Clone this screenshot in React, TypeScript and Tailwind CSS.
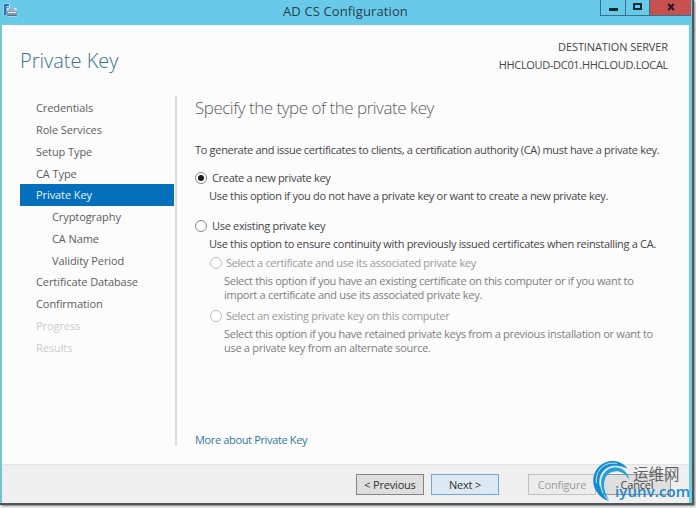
import type { ReactNode } from "react";

const steps = [
  { label: "Credentials", style: "pl-4 text-[#5c5c5c]" },
  { label: "Role Services", style: "pl-4 text-[#5c5c5c]" },
  { label: "Setup Type", style: "pl-4 text-[#5c5c5c]" },
  { label: "CA Type", style: "pl-4 text-[#5c5c5c]" },
  { label: "Private Key", style: "pl-4 bg-[#0470bc] text-[#e4f3fc]" },
  { label: "Cryptography", style: "pl-8 text-[#5c5c5c]" },
  { label: "CA Name", style: "pl-8 text-[#5c5c5c]" },
  { label: "Validity Period", style: "pl-8 text-[#5c5c5c]" },
  { label: "Certificate Database", style: "pl-4 text-[#5c5c5c]" },
  { label: "Confirmation", style: "pl-4 text-[#5c5c5c]" },
  { label: "Progress", style: "pl-4 text-[#cbcbcb]" },
  { label: "Results", style: "pl-4 text-[#cbcbcb]" },
];

function Radio({ checked, disabled, children }: { checked?: boolean; disabled?: boolean; children: ReactNode }) {
  return (
    <div className={disabled ? "flex h-4 items-center gap-[4px] text-[#999]" : "flex h-4 items-center gap-[5px] text-[#444]"}>
      <span
        className={
          disabled
            ? "flex size-[12px] items-center justify-center rounded-full border border-[#bdbdbd] bg-white"
            : "flex size-[12px] items-center justify-center rounded-full border border-[#858585] bg-white"
        }
      >
        {checked && <span className="size-[6px] rounded-full bg-[#1c1c1c]" />}
      </span>
      {children}
    </div>
  );
}

function ServerIcon() {
  return (
    <svg className="mt-[3px] ml-[3px] size-[15px]" viewBox="0 0 15 15">
      <path d="M.5.5h6.500v4.500h6l1 2v6.500H4.500V12H.5Z" fill="#d3edf8" opacity=".8" />
      <path d="M1 1h5v2H3.500v9H1z" fill="#2c73b0" />
      <path d="M3.500 4.500H6" stroke="#4d8fc2" />
      <path d="M6.500 7.500V6h4v1.500" fill="none" stroke="#6a8494" />
      <rect x="4" y="7.500" width="10" height="5.500" rx="1" fill="#8398a8" />
      <path d="M5 9.500h8" stroke="#e3edf2" />
      <path d="M4.500 12.500h9" stroke="#55728a" />
    </svg>
  );
}

function Watermark() {
  return (
    <div className="absolute top-[459px] left-[592px] h-[46px] w-[102px]">
      <svg className="absolute inset-0 h-full w-full" viewBox="0 0 102 46">
        <path d="M35.500 9.500C30 2 20 0 12 4 4 8 0 17 1.500 25 3 33 9 40 17 42 11 37 7 29 8 20 9.500 10 20 3 35.500 9.500Z" fill="#168bd0" />
        <path d="M37.500 21C36 12 27 6 19 9 11 12 8 20 9.500 28 10.500 34 13 38 17 41 13 34 10.500 27 13 20 16 11 30 8 37.500 21Z" fill="#2a9edc" />
        <path d="M4.500 24C3 12 12 2 25 4.500M8 27C6 15 14 5 27 7.500" fill="none" stroke="#d4eefa" strokeWidth=".9" />
      </svg>
      <span className="absolute top-[4px] left-[41px] font-['Noto_Sans_CJK_SC',sans-serif] text-[15.500px] leading-[20px] whitespace-nowrap text-[#606468]">运维网</span>
      <span className="absolute top-[22px] left-[23px] font-['Open_Sans',sans-serif] text-[15px] leading-[20px] font-semibold tracking-[0.1px] whitespace-nowrap text-[#2389ca]">iyunv.com</span>
    </div>
  );
}

export default function App() {
  return (
    <div className="relative h-[508px] w-[696px] overflow-hidden bg-[#f7f7f7] font-['Open_Sans','Noto_Sans',sans-serif] text-[11px] leading-4 whitespace-nowrap">
      <div className="flex h-[505px] w-[694px] flex-col border-r-2 border-b-2 border-[#4d5658] shadow-[1px_1px_2px_#777]">
        <header className="flex h-[25px] shrink-0 bg-[#68cae8]">
          <ServerIcon />
          <h1 className="w-[582px] pl-[73px] text-center text-[13px] leading-[23px] tracking-[0.12px] text-[#27414c]">AD CS Configuration</h1>
          <div className="flex h-[16px] w-[91px] border-b border-l border-[#337387]">
            <div className="flex w-[25px] items-center justify-center border-r border-[#337387]">
              <span className="mt-[3px] h-[3px] w-[9px] bg-[#102a34]" />
            </div>
            <div className="flex w-[24px] items-center justify-center border-r border-[#337387]">
              <span className="mt-[-2px] h-[7px] w-[9px] border-2 border-[#102a34]" />
            </div>
            <div className="flex flex-1 items-center justify-center bg-[#c7514e]">
              <svg className="mt-[-2px] h-[8px] w-[8px]" viewBox="0 0 8 8"><path d="M1.200 1 6.800 7M6.800 1 1.200 7" stroke="#26191b" strokeWidth="2" /></svg>
            </div>
          </div>
        </header>

        <div className="flex min-h-0 flex-1 flex-col border-r-[3px] border-l-2 border-r-[#70cce4] border-l-[#74c5ce] bg-[#fcfcfc]">
          <div className="flex h-[71px] shrink-0 justify-between pr-[21px] pl-[18px]">
            <h2 className="pt-[21px] text-[20px] leading-[30px] font-light text-[#39718e]">Private Key</h2>
            <div className="pt-[13px] text-right text-[11px] leading-[18px] text-[#454545]">
              <p className="tracking-[-0.100px]">DESTINATION SERVER</p>
              <p className="tracking-[-0.320px]">HHCLOUD-DC01.HHCLOUD.LOCAL</p>
            </div>
          </div>

          <div className="flex h-[368px] shrink-0">
            <nav className="ml-[18px] h-[350px] w-[157px] border-r-2 border-[#dedede] pt-[1px] pr-px tracking-[-0.08px]">
              {steps.map(({ label, style }) => (
                <div key={label} className={`flex h-[21.750px] items-center pt-px ${style}`}>{label}</div>
              ))}
            </nav>
            <main className="pl-[18px] tracking-[-0.31px] text-[#444]">
              <h3 className="text-[17px] leading-[24px] font-light tracking-[-0.49px] text-[#5d5d5d]">Specify the type of the private key</h3>
              <p className="mt-[22px]">To generate and issue certificates to clients, a certification authority (CA) must have a private key.</p>
              <div className="mt-[12px]"><Radio checked>Create a new private key</Radio></div>
              <p className="mt-[2px] pl-[14px]">Use this option if you do not have a private key or want to create a new private key.</p>
              <div className="mt-[14px]"><Radio>Use existing private key</Radio></div>
              <p className="mt-[2px] pl-[14px]">Use this option to ensure continuity with previously issued certificates when reinstalling a CA.</p>
              <div className="mt-[3px] pl-[15px]"><Radio disabled>Select a certificate and use its associated private key</Radio></div>
              <div className="mt-[3px] pl-[29px] leading-[14px] tracking-[-0.29px] text-[#7c7c7c]">
                <p>Select this option if you have an existing certificate on this computer or if you want to</p>
                <p>import a certificate and use its associated private key.</p>
              </div>
              <div className="mt-[6px] pl-[15px]"><Radio disabled>Select an existing private key on this computer</Radio></div>
              <div className="mt-[3px] pl-[29px] leading-[14px] tracking-[-0.29px] text-[#7c7c7c]">
                <p>Select this option if you have retained private keys from a previous installation or want to</p>
                <p>use a private key from an alternate source.</p>
              </div>
              <p className="mt-[77px] tracking-[-0.350px] text-[#34769f]">More about Private Key</p>
            </main>
          </div>

          <footer className="flex flex-1 border-t border-[#e2e2e2] bg-[#efefef] pt-[9px] pl-[354px] tracking-[-0.2px]">
            <button className="h-[21px] w-[68px] border border-[#858585] bg-[#dedede] text-[#303030]">&lt; Previous</button>
            <button className="ml-[7px] h-[21px] w-[68px] border border-[#75a6d8] bg-[#dce8f2] text-[#303030]">Next &gt;</button>
            <button className="ml-[29px] h-[21px] w-[68px] border border-[#c2c2c2] bg-[#ececec] text-[#9b9b9b]">Configure</button>
            <button className="ml-[7px] h-[21px] w-[68px] border border-[#969696] bg-[#dfdfdf] text-[#424242]">Cancel</button>
          </footer>
        </div>
      </div>
      <Watermark />
    </div>
  );
}
